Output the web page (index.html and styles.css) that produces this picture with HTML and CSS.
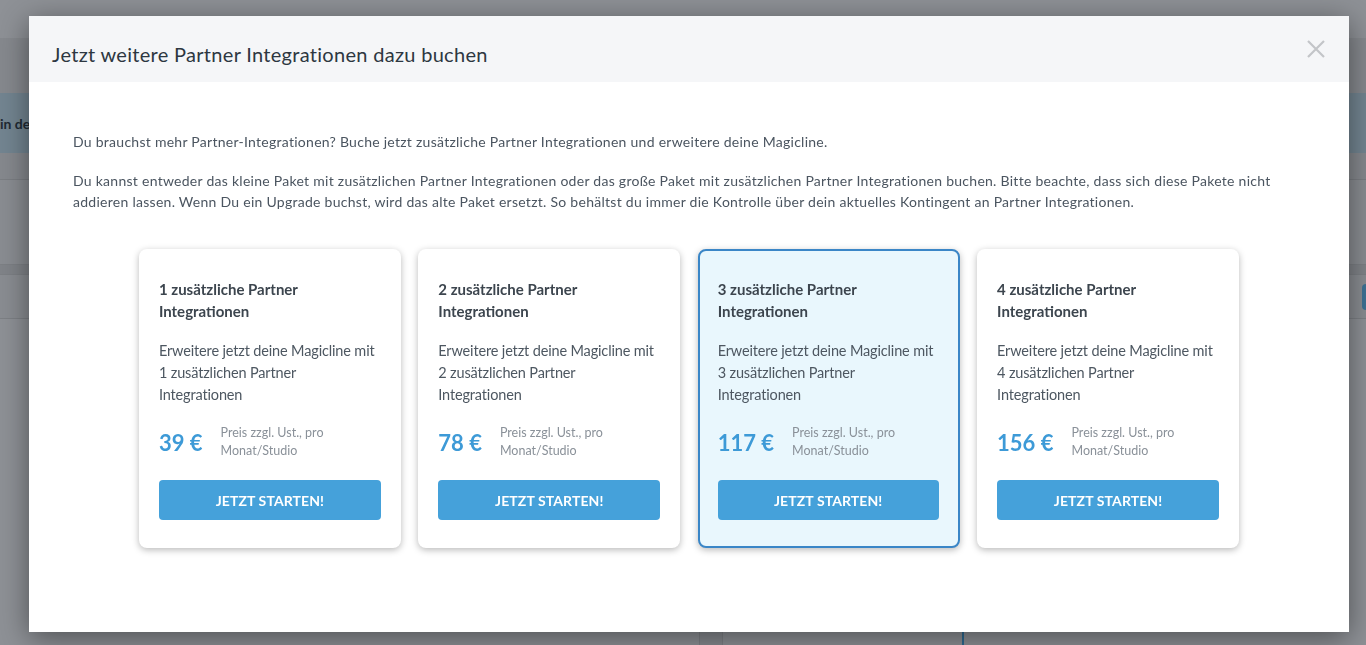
FILE: index.html
```
<!DOCTYPE html>
<html lang="de">
<head>
<meta charset="utf-8">
<title>Partner Integrationen</title>
<link rel="stylesheet" href="styles.css">
</head>
<body>
<div class="page">
  <div class="band band-top"></div>
  <div class="band band-sub"></div>
  <div class="band band-info"><span class="info-text">in der Übersicht</span></div>
  <div class="band band-a"></div>
  <div class="band band-b"></div>
  <div class="band band-c"></div>
  <div class="band band-d"><span class="side-pill"></span></div>
  <div class="band band-rest">
    <div class="rest-col"></div>
    <div class="rest-block"></div>
    <div class="rest-gap"></div>
    <div class="rest-blue"></div>
  </div>
</div>

<div class="overlay">
  <div class="modal">
    <div class="modal-header">
      <h2 class="modal-title">Jetzt weitere Partner Integrationen dazu buchen</h2>
      <button class="close" aria-label="Schließen">
        <svg width="18" height="18" viewBox="0 0 18 18"><path d="M1 1L17 17M17 1L1 17" stroke="#c3c5c8" stroke-width="2.2" fill="none"/></svg>
      </button>
    </div>
    <div class="modal-body">
      <p class="intro">Du brauchst mehr Partner-Integrationen? Buche jetzt zusätzliche Partner Integrationen und erweitere deine Magicline.</p>
      <p class="intro">Du kannst entweder das kleine Paket mit zusätzlichen Partner Integrationen oder das große Paket mit zusätzlichen Partner Integrationen buchen. Bitte beachte, dass sich diese Pakete nicht addieren lassen. Wenn Du ein Upgrade buchst, wird das alte Paket ersetzt. So behältst du immer die Kontrolle über dein aktuelles Kontingent an Partner Integrationen.</p>

      <div class="cards">
        <div class="card">
          <div class="card-title">1 zusätzliche Partner Integrationen</div>
          <div class="card-desc">Erweitere jetzt deine Magicline mit 1 zusätzlichen Partner Integrationen</div>
          <div class="price-row"><span class="price">39 €</span><span class="price-note">Preis zzgl. Ust., pro Monat/Studio</span></div>
          <button class="btn">JETZT STARTEN!</button>
        </div>
        <div class="card">
          <div class="card-title">2 zusätzliche Partner Integrationen</div>
          <div class="card-desc">Erweitere jetzt deine Magicline mit 2 zusätzlichen Partner Integrationen</div>
          <div class="price-row"><span class="price">78 €</span><span class="price-note">Preis zzgl. Ust., pro Monat/Studio</span></div>
          <button class="btn">JETZT STARTEN!</button>
        </div>
        <div class="card card-active">
          <div class="card-title">3 zusätzliche Partner Integrationen</div>
          <div class="card-desc">Erweitere jetzt deine Magicline mit 3 zusätzlichen Partner Integrationen</div>
          <div class="price-row"><span class="price">117 €</span><span class="price-note">Preis zzgl. Ust., pro Monat/Studio</span></div>
          <button class="btn">JETZT STARTEN!</button>
        </div>
        <div class="card">
          <div class="card-title">4 zusätzliche Partner Integrationen</div>
          <div class="card-desc">Erweitere jetzt deine Magicline mit 4 zusätzlichen Partner Integrationen</div>
          <div class="price-row"><span class="price">156 €</span><span class="price-note">Preis zzgl. Ust., pro Monat/Studio</span></div>
          <button class="btn">JETZT STARTEN!</button>
        </div>
      </div>
    </div>
  </div>
</div>
</body>
</html>
```

FILE: styles.css
```
* { box-sizing: border-box; }

html, body {
  margin: 0;
  padding: 0;
  height: 100%;
  overflow: hidden;
}

body {
  font-family: "Lato", "Liberation Sans", sans-serif;
  background: #8d9095;
}

/* underlying page (seen through the overlay) */
.page {
  display: flex;
  flex-direction: column;
  height: 645px;
}
.band { flex: none; }
.band-top { height: 38px; background: #8e9196; }
.band-sub { height: 55px; background: #86898e; }
.band-info {
  height: 60px;
  background: #738591;
  display: flex;
  align-items: center;
}
.info-text {
  font-weight: 700;
  font-size: 14px;
  color: #1f2a33;
  white-space: nowrap;
}
.band-a { height: 27px; background: #86898e; border-bottom: 1px solid #7b7e83; }
.band-b { height: 85px; background: #8a8d92; border-bottom: 1px solid #7d8085; }
.band-c { height: 10px; background: #818489; border-bottom: 1px solid #7d8085; }
.band-d {
  height: 44px;
  background: #8a8d92;
  border-bottom: 1px solid #7d8085;
  display: flex;
  justify-content: flex-end;
  align-items: center;
}
.side-pill {
  width: 4px;
  height: 26px;
  border-radius: 4px 0 0 4px;
  background: #3e7295;
}
.band-rest {
  flex: 1;
  background: #8e9196;
  display: flex;
}
.rest-col { width: 699px; }
.rest-block { width: 24px; background: #878a8f; border-left: 1px solid #7e8186; border-right: 1px solid #7e8186; }
.rest-gap { width: 239px; }
.rest-blue { width: 2px; background: #2e6a92; }

/* overlay + modal */
.overlay {
  position: fixed;
  inset: 0;
  display: flex;
  justify-content: flex-start;
  align-items: flex-start;
  padding: 16px 0 0 29px;
}

.modal {
  width: 1320px;
  height: 616px;
  background: #ffffff;
  box-shadow: 0 6px 28px rgba(0, 0, 0, 0.45);
}

.modal-header {
  height: 66px;
  background: #f5f6f8;
  display: flex;
  align-items: center;
  justify-content: space-between;
  padding: 0 24px 0 23px;
}

.modal-title {
  margin: 10px 0 0;
  font-size: 20px;
  font-weight: 400;
  color: #2d3741;
  letter-spacing: 0.3px;
}

.close {
  border: 0;
  background: none;
  padding: 0;
  width: 18px;
  height: 18px;
  display: flex;
  cursor: pointer;
}

.modal-body {
  padding: 49px 44px 0;
}

.intro {
  margin: 0 0 18px;
  font-size: 14px;
  line-height: 21px;
  letter-spacing: 0.27px;
  color: #4b5560;
}
.intro + .intro { margin-bottom: 0; }

.cards {
  margin-top: 37px;
  display: flex;
  justify-content: center;
  gap: 17.4px;
}

.card {
  width: 262px;
  background: #ffffff;
  border-radius: 8px;
  padding: 29px 20px 28px;
  box-shadow: 0 2px 7px rgba(0, 0, 0, 0.28);
  display: flex;
  flex-direction: column;
}

.card-active {
  background: #e9f7fd;
  border: 2px solid #3a86c7;
  padding: 27px 19px 26px 18px;
}

.card-title {
  font-size: 15px;
  font-weight: 700;
  line-height: 22px;
  color: #3c454e;
  margin-bottom: 18px;
}

.card-desc {
  font-size: 14.5px;
  line-height: 22px;
  letter-spacing: -0.15px;
  color: #4d5761;
  margin-bottom: 18px;
}

.price-row {
  display: flex;
  align-items: center;
}

.price {
  margin-right: 18px;
  flex: none;
  font-size: 22px;
  font-weight: 700;
  color: #3d9ad7;
}

.price-note {
  font-size: 12.5px;
  line-height: 18px;
  color: #8a9199;
}

.btn {
  margin-top: 20px;
  height: 40px;
  border: 0;
  border-radius: 4px;
  background: #45a1da;
  color: #ffffff;
  font-family: inherit;
  font-size: 14px;
  font-weight: 700;
  letter-spacing: 0.1px;
  cursor: pointer;
}
```
